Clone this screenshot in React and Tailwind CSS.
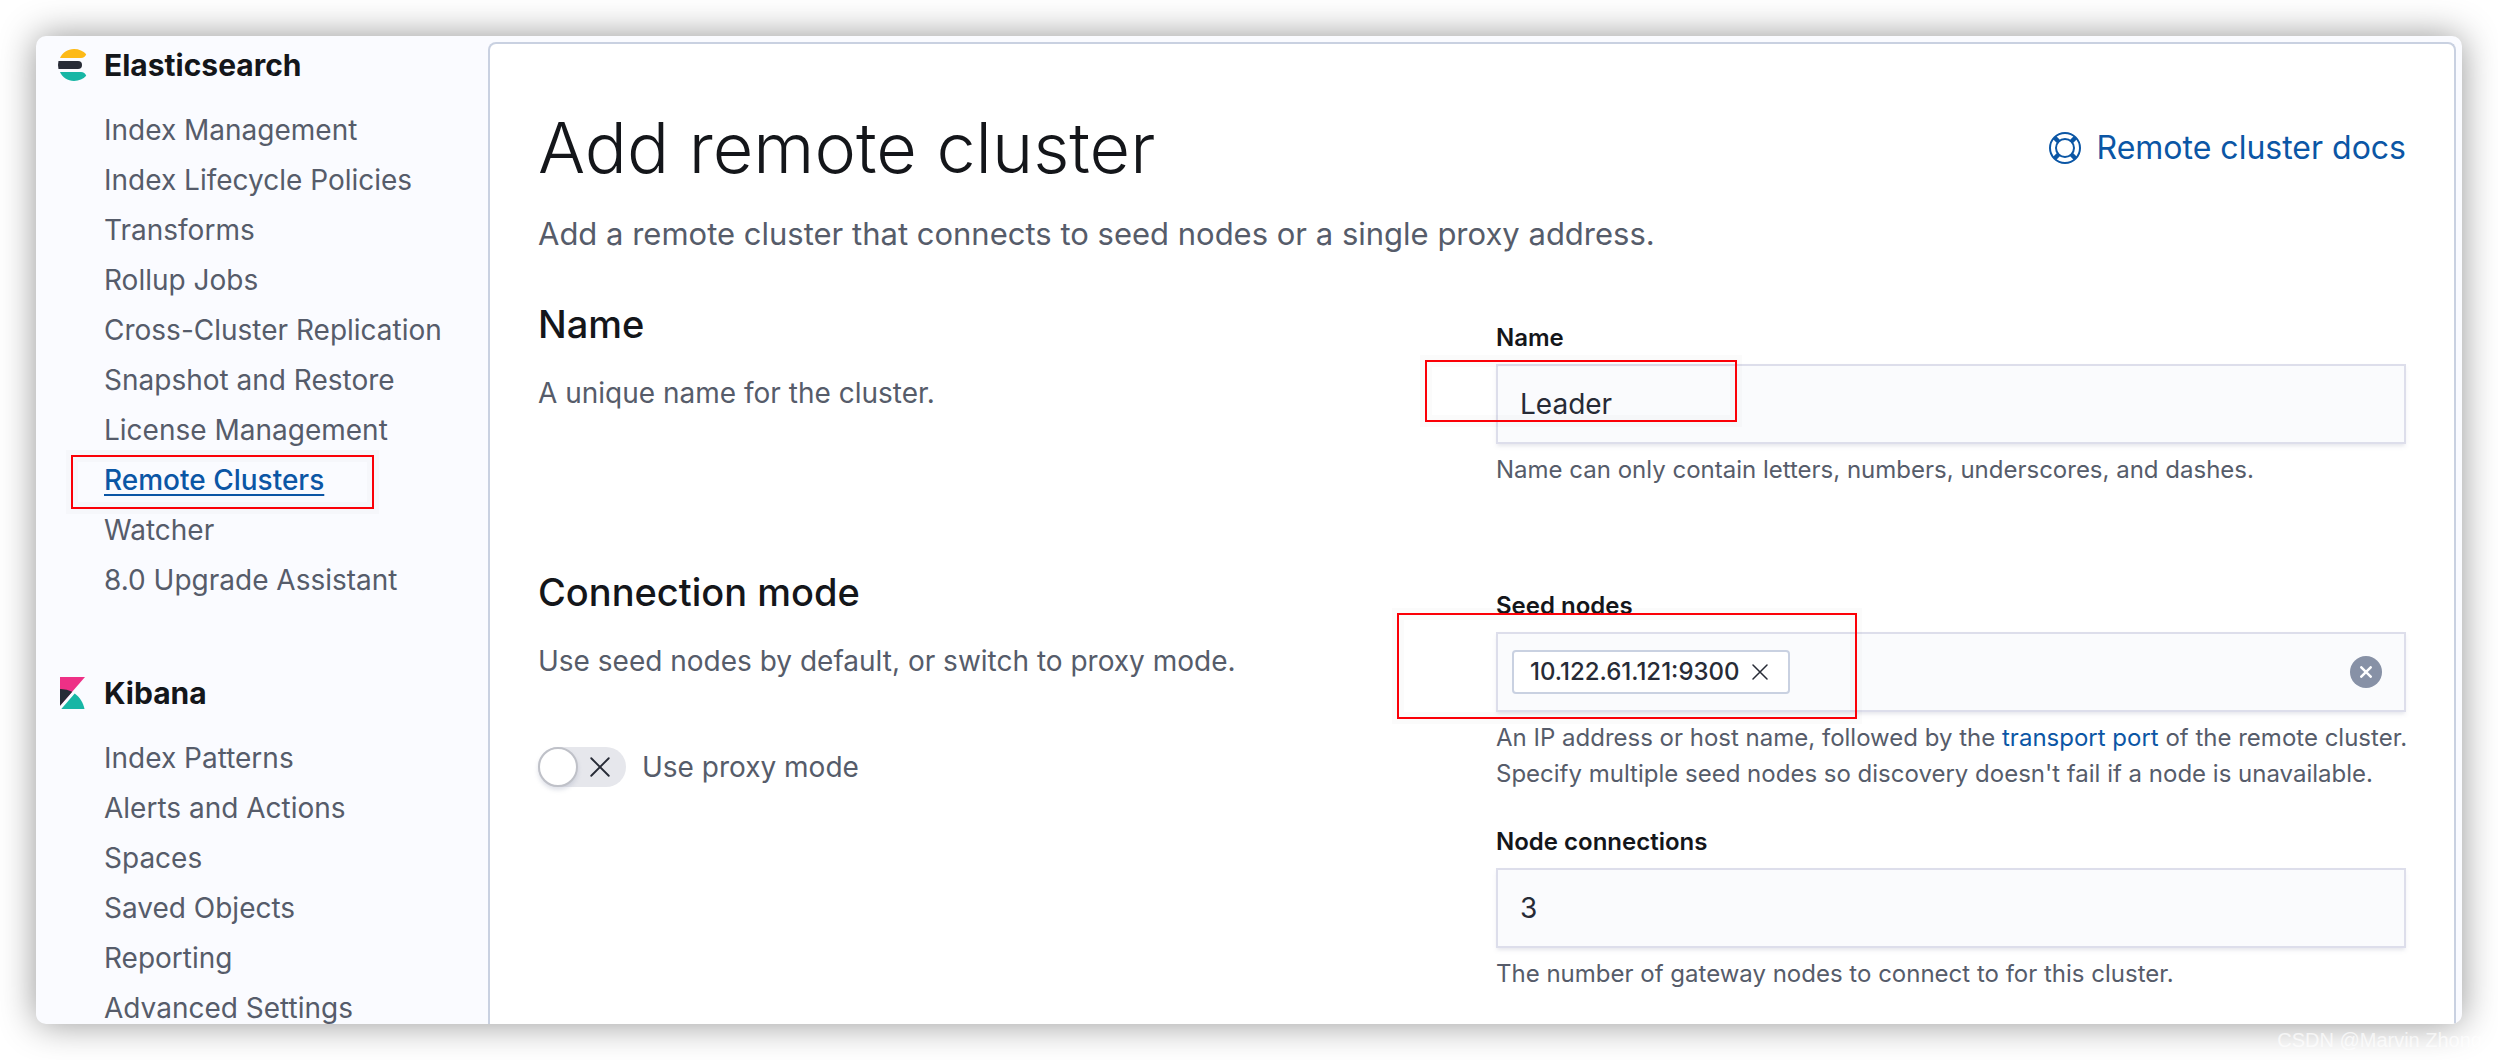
import React, { useState } from 'react';

const navGroups = [
  {
    title: 'Elasticsearch',
    icon: ElasticsearchLogo,
    items: [
      'Index Management',
      'Index Lifecycle Policies',
      'Transforms',
      'Rollup Jobs',
      'Cross-Cluster Replication',
      'Snapshot and Restore',
      'License Management',
      'Remote Clusters',
      'Watcher',
      '8.0 Upgrade Assistant'
    ]
  },
  {
    title: 'Kibana',
    icon: KibanaLogo,
    items: [
      'Index Patterns',
      'Alerts and Actions',
      'Spaces',
      'Saved Objects',
      'Reporting',
      'Advanced Settings'
    ]
  }
];

const activeItem = 'Remote Clusters';

function ElasticsearchLogo() {
  return (
    <svg className="size-8" viewBox="0 0 32 32" aria-hidden="true">
      <path d="M4 9C6.500 3.500 11.500 0 18 0c5 0 9.300 2 12.200 5.200C29.500 7.500 27.500 9 25 9Z" fill="#fdba17" />
      <path d="M2.500 12H22a4 4 0 0 1 0 8H2.500a16 16 0 0 1 0-8Z" fill="#272b36" />
      <path d="M4 23h21c2.500 0 4.500 1.500 5.200 3.800C27.300 30 23 32 18 32 11.500 32 6.500 28.500 4 23Z" fill="#17b6a5" />
    </svg>
  );
}

function KibanaLogo() {
  return (
    <svg className="size-8" viewBox="0 0 32 32" aria-hidden="true">
      <path d="M4 0h25L4 28.800Z" fill="#ee3086" />
      <path d="M4 12v16.800l12.200-14A24 24 0 0 0 4 12Z" fill="#272b36" />
      <path d="M18.700 16.500 5.300 32h23.200c-1.200-6.300-4.800-11.900-9.800-15.500Z" fill="#17b6a5" />
    </svg>
  );
}

function HelpIcon() {
  return (
    <svg className="size-8" viewBox="0 0 32 32" fill="none" stroke="currentColor" aria-hidden="true">
      <circle cx="16" cy="16" r="15" strokeWidth="2" />
      <circle cx="16" cy="16" r="9" strokeWidth="2" />
      <path d="M5.500 5.500l4.500 4.500M26.500 5.500 22 10M5.500 26.500 10 22M26.500 26.500 22 22" strokeWidth="4.500" />
    </svg>
  );
}

function CrossIcon({ className }) {
  return (
    <svg className={className} viewBox="0 0 16 16" fill="none" stroke="currentColor" strokeLinecap="round" aria-hidden="true">
      <path d="M1 1l14 14M15 1 1 15" strokeWidth="1.500" />
    </svg>
  );
}

const Highlight = ({ className }) => (
  <span
    className={`pointer-events-none absolute border-2 border-[#fb0007] shadow-[0_0_0_5px_rgba(0,0,0,0.015),inset_0_0_0_5px_rgba(0,0,0,0.015)] ${className}`}
  />
);

const Sidebar = () => (
  <nav className="w-[452px] shrink-0 pl-5 pt-[9px]">
    {navGroups.map((group) => (
      <div key={group.title} className="mb-[68px]">
        <h2 className="flex items-center gap-4 text-[30px] leading-10 font-bold text-[#14161a]">
          <group.icon />
          {group.title}
        </h2>
        <ul className="mt-5 pl-12">
          {group.items.map((item) => (
            <li key={item} className="relative text-[28px] leading-[50px]">
              {item === activeItem ? (
                <>
                  <a href="#" aria-current="page" className="font-medium text-[#0b56a5] underline decoration-2 underline-offset-4">
                    {item}
                  </a>
                  <Highlight className="-left-[33px] top-0 h-[54px] w-[303px]" />
                </>
              ) : (
                <a href="#" className="text-[#565c6a]">{item}</a>
              )}
            </li>
          ))}
        </ul>
      </div>
    ))}
  </nav>
);

const FormSection = ({ title, description, extra, children }) => (
  <section className="grid grid-cols-2 gap-12">
    <div>
      <h2 className="text-[38px] leading-[48px] font-medium text-[#14161a]">{title}</h2>
      <p className="mt-6 text-[28px] leading-[42px]">{description}</p>
      {extra}
    </div>
    <div className="space-y-8 pt-5">{children}</div>
  </section>
);

const FormRow = ({ id, label, help, children }) => (
  <div className="text-2xl leading-9">
    <label htmlFor={id} className="block font-semibold text-[#14161a]">{label}</label>
    <div className="relative my-2">{children}</div>
    <p id={`${id}-help`} className="whitespace-nowrap">{help}</p>
  </div>
);

const fieldClass =
  'h-20 w-full border-2 border-[#dddeeb] bg-[#fafbfd] text-[28px] text-[#272b36] shadow-[0_3px_4px_-1px_rgba(150,155,180,0.25)]';

export default function App() {
  const [name, setName] = useState('Leader');
  const [seeds, setSeeds] = useState(['10.122.61.121:9300']);
  const [seedText, setSeedText] = useState('');
  const [connections, setConnections] = useState('3');
  const [proxyMode, setProxyMode] = useState(false);

  return (
    <div className="relative h-screen overflow-hidden bg-white p-9 font-['Inter',sans-serif] text-[#565c6a]">
      <div className="flex h-full overflow-hidden rounded-[10px] bg-[#fafbff] shadow-[0_0_36px_rgba(0,0,0,0.42)]">
        <Sidebar />

        <main className="mr-1.5 mt-1.5 min-w-0 flex-1 rounded-t-lg border-2 border-b-0 border-[#c9d1e1] bg-white px-12 pt-16">
          <header>
            <div className="flex items-center justify-between">
              <h1 className="text-[70px] leading-20 font-light text-[#14161a]">Add remote cluster</h1>
              <a href="#" className="flex items-center gap-4 text-[32px] leading-10 text-[#0b56a5]">
                <HelpIcon />
                Remote cluster docs
              </a>
            </div>
            <p className="mt-[22px] text-[31px] leading-[48px]">
              Add a remote cluster that connects to seed nodes or a single proxy address.
            </p>
          </header>

          <form className="mt-[42px] space-y-20" onSubmit={(e) => e.preventDefault()}>
            <FormSection title="Name" description="A unique name for the cluster.">
              <FormRow id="name" label="Name" help="Name can only contain letters, numbers, underscores, and dashes.">
                <input
                  id="name"
                  type="text"
                  value={name}
                  onChange={(e) => setName(e.target.value)}
                  aria-describedby="name-help"
                  className={`${fieldClass} block px-[22px]`}
                />
                <Highlight className="-left-[71px] -top-1 h-[62px] w-[312px]" />
              </FormRow>
            </FormSection>

            <FormSection
              title="Connection mode"
              description="Use seed nodes by default, or switch to proxy mode."
              extra={
                <label className="mt-16 flex w-fit items-center gap-4 text-[28px] leading-[42px]">
                  <input
                    type="checkbox"
                    role="switch"
                    checked={proxyMode}
                    onChange={(e) => setProxyMode(e.target.checked)}
                    className="peer sr-only"
                  />
                  <span className="flex h-10 w-[88px] items-center gap-3 rounded-full bg-[#e6e7ec] text-[#272b36] peer-checked:flex-row-reverse">
                    <span className="size-10 rounded-full border-2 border-[#bfc1c8] bg-white shadow-[0_3px_4px_rgba(150,155,180,0.3)]" />
                    <CrossIcon className="size-5" />
                  </span>
                  Use proxy mode
                </label>
              }
            >
              <FormRow
                id="seeds"
                label="Seed nodes"
                help={
                  <>
                    An IP address or host name, followed by the{' '}
                    <a href="#" className="text-[#0b56a5]">transport port</a> of the remote cluster.
                    <br />
                    Specify multiple seed nodes so discovery doesn't fail if a node is unavailable.
                  </>
                }
              >
                <div className={`${fieldClass} flex items-center gap-4 pl-3.5 pr-[22px]`}>
                  {seeds.map((seed) => (
                    <span
                      key={seed}
                      className="flex h-11 items-center gap-3 rounded border-2 border-[#c9d1e1] bg-white px-4 text-2xl font-medium"
                    >
                      {seed}
                      <button type="button" aria-label={`Remove ${seed}`} onClick={() => setSeeds(seeds.filter((s) => s !== seed))}>
                        <CrossIcon className="mr-1 size-4" />
                      </button>
                    </span>
                  ))}
                  <input
                    id="seeds"
                    type="text"
                    value={seedText}
                    onChange={(e) => setSeedText(e.target.value)}
                    aria-describedby="seeds-help"
                    className="h-full min-w-0 flex-1 bg-transparent outline-none"
                  />
                  <button
                    type="button"
                    aria-label="Clear input"
                    onClick={() => setSeeds([])}
                    className="flex size-8 items-center justify-center rounded-full bg-[#8791a6] text-white"
                  >
                    <svg className="size-3" viewBox="0 0 12 12" stroke="currentColor" strokeWidth="2.500" strokeLinecap="round" aria-hidden="true">
                      <path d="M1.300 1.300l9.400 9.400M10.700 1.300 1.300 10.700" />
                    </svg>
                  </button>
                </div>
                <Highlight className="-left-[99px] -top-[19px] h-[106px] w-[460px]" />
              </FormRow>

              <FormRow id="connections" label="Node connections" help="The number of gateway nodes to connect to for this cluster.">
                <input
                  id="connections"
                  type="text"
                  inputMode="numeric"
                  value={connections}
                  onChange={(e) => setConnections(e.target.value)}
                  aria-describedby="connections-help"
                  className={`${fieldClass} block px-[22px]`}
                />
              </FormRow>
            </FormSection>
          </form>
        </main>
      </div>

      <p className="absolute bottom-2 right-4 font-['Liberation_Sans',sans-serif] text-xl leading-6 text-white/70">
        CSDN @Marvin Zhong
      </p>
    </div>
  );
}
